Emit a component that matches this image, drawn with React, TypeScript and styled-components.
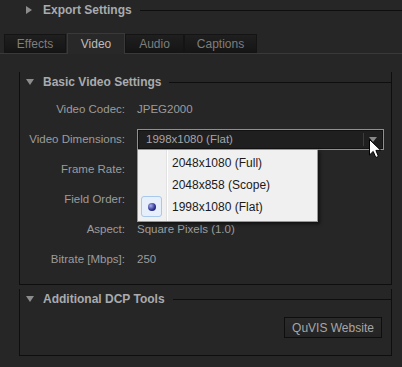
import React from "react";
import styled, { createGlobalStyle } from "styled-components";

const Global = createGlobalStyle`
	body {
		margin: 0;
		background: #262626;
		font-family: "Liberation Sans", Arial, sans-serif;
		font-size: 11.5px;
		color: #9c9c9c;
		overflow: hidden;
	}
`;

const Page = styled.div`
	width: 402px;
	height: 367px;
	background: #262626;
`;

const SectionHead = styled.div<{ $pad: number }>`
	display: flex;
	align-items: center;
	height: 20px;
	padding-left: ${(p) => p.$pad}px;
`;

const Arrow = styled.span<{ $open?: boolean }>`
	width: 0;
	height: 0;
	${(p) =>
		p.$open
			? `border-left: 4px solid transparent;
		   border-right: 4px solid transparent;
		   border-top: 6px solid #8c8c8c;`
			: `border-top: 4px solid transparent;
		   border-bottom: 4px solid transparent;
		   border-left: 6px solid #8c8c8c;`}
`;

const HeadTitle = styled.span<{ $gap: number }>`
	margin-left: ${(p) => p.$gap}px;
	font-weight: bold;
	font-size: 12px;
	color: #a9abae;
	white-space: nowrap;
`;

const HeadLine = styled.span`
	flex: 1;
	height: 1px;
	margin-left: 8px;
	background: #0e0e0e;
`;

const TabBar = styled.div`
	display: flex;
	align-items: flex-end;
	margin-top: 13px;
	padding-left: 4px;
	height: 20px;
	border-bottom: 1px solid #393939;
`;

const Tab = styled.div<{ $w: number; $active?: boolean }>`
	box-sizing: border-box;
	width: ${(p) => p.$w}px;
	height: ${(p) => (p.$active ? 21 : 19)}px;
	margin-bottom: ${(p) => (p.$active ? -1 : 0)}px;
	margin-left: ${(p) => (p.$active ? 1 : 0)}px;
	display: flex;
	align-items: center;
	justify-content: center;
	font-size: 12px;
	border: 1px solid ${(p) => (p.$active ? "#393939" : "#141414")};
	border-bottom: ${(p) => (p.$active ? "none" : "1px solid #141414")};
	background: ${(p) =>
		p.$active ? "#282828" : "linear-gradient(#1f1f1f, #151515)"};
	color: ${(p) => (p.$active ? "#bdbdbd" : "#7e7e7e")};
`;

const Panel = styled.div`
	padding: 0 10px 0 19px;
`;

const Group = styled.div<{ $top: number }>`
	margin-top: ${(p) => p.$top}px;
	border: 1px solid #0e0e0e;
	border-top: none;
	& > ${SectionHead} {
		margin-top: -10px;
	}
`;

const Rows = styled.div`
	display: grid;
	grid-template-columns: 105px 1fr;
	grid-auto-rows: 30px;
	column-gap: 12px;
	padding: 2px 8px 10px 0;
`;

const Label = styled.div`
	display: flex;
	align-items: center;
	justify-content: flex-end;
	white-space: nowrap;
`;

const Value = styled.div`
	display: flex;
	align-items: center;
	white-space: nowrap;
	position: relative;
`;

const Select = styled.div`
	position: relative;
	box-sizing: border-box;
	width: 247px;
	height: 21px;
	border: 1px solid #c98d0c;
	display: flex;
`;

const SelectInner = styled.div`
	flex: 1;
	display: flex;
	align-items: center;
	border: 1px solid #121212;
	background: #1f1f1f;
	color: #a6a6a6;
	padding-left: 7px;
`;

const SelectText = styled.span`
	flex: 1;
`;

const SelectSep = styled.span`
	width: 1px;
	height: 13px;
	background: #3c3c3c;
	margin-right: 5px;
`;

const SelectArrow = styled.span`
	width: 0;
	height: 0;
	margin-right: 5px;
	border-left: 4px solid transparent;
	border-right: 4px solid transparent;
	border-top: 5px solid #8a8a8a;
`;

const Menu = styled.div`
	position: absolute;
	left: -1px;
	top: 19px;
	width: 181px;
	box-sizing: border-box;
	padding: 2px 0 3px;
	background: #f0f0f0;
	border: 1px solid #979797;
	box-shadow: 2px 2px 3px rgba(0, 0, 0, 0.55);
	z-index: 2;
	display: flex;
	flex-direction: column;
	background-image: linear-gradient(
		to right,
		transparent 28px,
		#e2e2e2 28px,
		#e2e2e2 29px,
		#ffffff 29px,
		#ffffff 30px,
		transparent 30px
	);
`;

const MenuItem = styled.div`
	height: 22px;
	display: flex;
	align-items: center;
	font-size: 12px;
	color: #1a1a1a;
`;

const Gutter = styled.div`
	width: 34px;
	height: 100%;
	display: flex;
	align-items: center;
	padding-left: 3px;
	box-sizing: border-box;
`;

const CheckFrame = styled.div<{ $on?: boolean }>`
	box-sizing: border-box;
	width: 21px;
	height: 21px;
	border-radius: 3px;
	display: flex;
	align-items: center;
	justify-content: center;
	border: 1px solid ${(p) => (p.$on ? "#a8c8ec" : "transparent")};
	background: ${(p) => (p.$on ? "#e6effa" : "transparent")};
`;

const Bullet = styled.span`
	width: 8px;
	height: 8px;
	border-radius: 50%;
	background: radial-gradient(circle at 35% 35%, #a8b0f0, #2a2f8a 60%, #161a5a);
`;

const Cursor = styled.svg`
	position: absolute;
	left: 231px;
	top: 9px;
	z-index: 3;
`;

const ToolBody = styled.div`
	display: flex;
	justify-content: flex-end;
	padding: 8px 9px 17px 0;
`;

const Button = styled.div`
	box-sizing: border-box;
	width: 98px;
	height: 21px;
	display: flex;
	align-items: center;
	justify-content: center;
	border: 1px solid #0e0e0e;
	background: linear-gradient(#2a2a2a, #242424);
	color: #a6a6a6;
	font-size: 12px;
`;

const options = ["2048x1080 (Full)", "2048x858 (Scope)", "1998x1080 (Flat)"];

export default function App() {
	const selected = "1998x1080 (Flat)";
	return (
		<Page>
			<Global />
			<SectionHead $pad={26}>
				<Arrow />
				<HeadTitle $gap={11}>Export Settings</HeadTitle>
				<HeadLine />
			</SectionHead>
			<TabBar>
				<Tab $w={62}>Effects</Tab>
				<Tab $w={58} $active>
					Video
				</Tab>
				<Tab $w={59}>Audio</Tab>
				<Tab $w={73}>Captions</Tab>
			</TabBar>
			<Panel>
				<Group $top={28}>
					<SectionHead $pad={6}>
						<Arrow $open />
						<HeadTitle $gap={9}>Basic Video Settings</HeadTitle>
						<HeadLine />
					</SectionHead>
					<Rows>
						<Label>Video Codec:</Label>
						<Value>JPEG2000</Value>
						<Label>Video Dimensions:</Label>
						<Value>
							<Select>
								<SelectInner>
									<SelectText>{selected}</SelectText>
									<SelectSep />
									<SelectArrow />
								</SelectInner>
								<Menu>
									{options.map((o) => (
										<MenuItem key={o}>
											<Gutter>
												<CheckFrame $on={o === selected}>
													{o === selected && <Bullet />}
												</CheckFrame>
											</Gutter>
											{o}
										</MenuItem>
									))}
								</Menu>
								<Cursor width="13" height="20" viewBox="0 0 13 20">
									<path
										d="M0.5 0.5 L0.5 16 L4.2 12.4 L6.8 18.5 L9.4 17.4 L6.9 11.4 L11.8 11.4 Z"
										fill="#fff"
										stroke="#000"
										strokeWidth="1"
										strokeLinejoin="round"
									/>
								</Cursor>
							</Select>
						</Value>
						<Label>Frame Rate:</Label>
						<Value />
						<Label>Field Order:</Label>
						<Value />
						<Label>Aspect:</Label>
						<Value>Square Pixels (1.0)</Value>
						<Label>Bitrate [Mbps]:</Label>
						<Value>250</Value>
					</Rows>
				</Group>
				<Group $top={14}>
					<SectionHead $pad={6}>
						<Arrow $open />
						<HeadTitle $gap={9}>Additional DCP Tools</HeadTitle>
						<HeadLine />
					</SectionHead>
					<ToolBody>
						<Button>QuVIS Website</Button>
					</ToolBody>
				</Group>
			</Panel>
		</Page>
	);
}
